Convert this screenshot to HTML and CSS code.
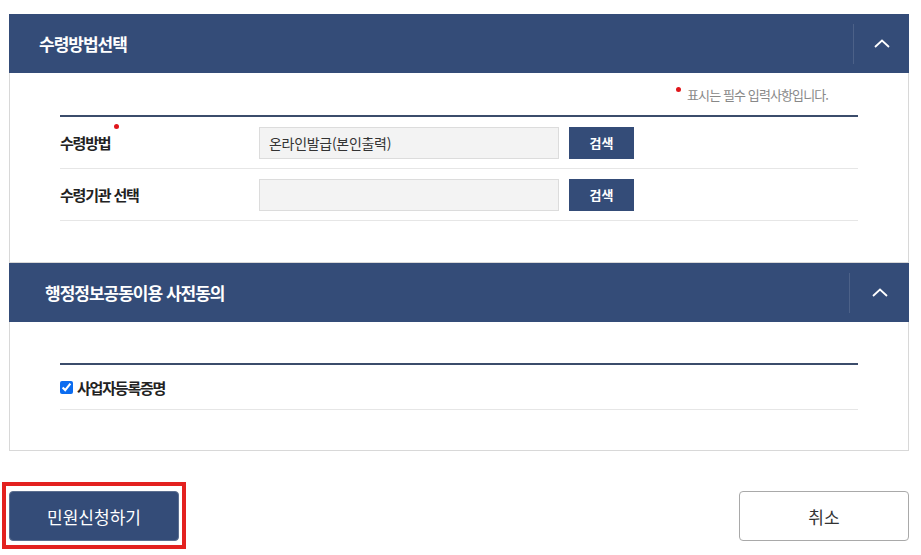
FILE: index.html
```html
<!DOCTYPE html>
<html lang="ko">
<head>
    <meta charset="UTF-8">
    <meta name="viewport" content="width=device-width, initial-scale=1.0">
    <title>수령방법선택</title>
    <link rel="stylesheet" href="styles.css">
</head>
<body>
    <div class="wrap">
        <section class="panel">
            <div class="panel-head">
                <h2>수령방법선택</h2>
                <button class="panel-toggle" type="button" aria-label="접기">
                    <svg width="16" height="9" viewBox="0 0 16 9"><polyline points="1,8 8,1.5 15,8" fill="none" stroke="#fff" stroke-width="1.8"/></svg>
                </button>
            </div>
            <div class="panel-body">
                <p class="req-note"><span class="req-dot"></span>표시는 필수 입력사항입니다.</p>
                <div class="form-table">
                    <div class="form-row">
                        <div class="form-label">수령방법<span class="req-dot"></span></div>
                        <div class="form-field">
                            <input class="text-input" type="text" value="온라인발급(본인출력)" readonly>
                            <button class="btn-search" type="button">검색</button>
                        </div>
                    </div>
                    <div class="form-row">
                        <div class="form-label">수령기관 선택</div>
                        <div class="form-field">
                            <input class="text-input" type="text" value="" readonly>
                            <button class="btn-search" type="button">검색</button>
                        </div>
                    </div>
                </div>
            </div>
        </section>

        <section class="panel panel-consent">
            <div class="panel-head">
                <h2>행정정보공동이용 사전동의</h2>
                <button class="panel-toggle" type="button" aria-label="접기">
                    <svg width="16" height="9" viewBox="0 0 16 9"><polyline points="1,8 8,1.5 15,8" fill="none" stroke="#fff" stroke-width="1.8"/></svg>
                </button>
            </div>
            <div class="panel-body">
                <div class="form-table">
                    <div class="form-row check-row">
                        <label class="check"><input type="checkbox" checked>사업자등록증명</label>
                    </div>
                </div>
            </div>
        </section>

        <div class="actions">
            <div class="highlight">
                <button class="btn-submit" type="button">민원신청하기</button>
            </div>
            <button class="btn-cancel" type="button">취소</button>
        </div>
    </div>
</body>
</html>
```

FILE: styles.css
```css
* {
    margin: 0;
    padding: 0;
    box-sizing: border-box;
}

body {
    font-family: "Noto Sans CJK KR", "Noto Sans", sans-serif;
    background: #fff;
    color: #222;
}

.wrap {
    width: 900px;
    margin: 14px 0 0 9px;
}

.panel-head {
    height: 59px;
    background: #344c78;
    display: flex;
    align-items: center;
    justify-content: space-between;
    padding-left: 30px;
}

.panel-head h2 {
    color: #fff;
    font-size: 17px;
    font-weight: 700;
    letter-spacing: -1px;
}

.panel-toggle {
    width: 56px;
    height: 40px;
    border: none;
    border-left: 1px solid rgba(255, 255, 255, 0.12);
    background: transparent;
    display: flex;
    align-items: center;
    justify-content: center;
    cursor: pointer;
}

.panel-consent .panel-head {
    padding-left: 36px;
}

.panel-consent .panel-toggle {
    width: 60px;
}

.panel-body {
    border: 1px solid #d8d8d8;
    border-top: none;
    padding: 12px 50px 41px 50px;
}

.panel-consent .panel-body {
    padding-top: 41px;
    padding-bottom: 40px;
}

.req-note {
    text-align: right;
    font-size: 13px;
    line-height: 20px;
    color: #888;
    letter-spacing: -0.9px;
    margin-bottom: 10px;
    padding-right: 30px;
}

.req-dot {
    display: inline-block;
    width: 5px;
    height: 5px;
    border-radius: 50%;
    background: #e0161b;
    vertical-align: top;
    margin: 2px 6px 0 0;
}

.form-table {
    border-top: 2px solid #3b4c6b;
}

.form-row {
    display: flex;
    align-items: center;
    height: 52px;
    border-bottom: 1px solid #e6e6e6;
}

.form-label {
    width: 199px;
    font-size: 15px;
    font-weight: 700;
    letter-spacing: -1.2px;
    color: #222;
}

.form-label .req-dot {
    margin: -8px 0 0 4px;
    vertical-align: top;
}

.form-field {
    display: flex;
    gap: 10px;
}

.text-input {
    width: 300px;
    height: 32px;
    border: 1px solid #dcdcdc;
    background: #f3f3f3;
    padding: 0 9px;
    font-family: inherit;
    font-size: 14px;
    color: #333;
    letter-spacing: -0.3px;
    outline: none;
}

.btn-search {
    width: 65px;
    height: 32px;
    border: none;
    background: #344c78;
    color: #fff;
    font-family: inherit;
    font-size: 13px;
    font-weight: 700;
    cursor: pointer;
}

.check-row {
    height: 45px;
}

.check {
    display: flex;
    align-items: center;
    font-size: 15px;
    font-weight: 700;
    letter-spacing: -1.2px;
    color: #222;
}

.check input {
    width: 13px;
    height: 13px;
    margin: 0 4px 0 0;
    accent-color: #0b6cf0;
}

.actions {
    display: flex;
    justify-content: space-between;
    align-items: flex-start;
    margin-top: 40px;
}

.highlight {
    border: 4px solid #e3211f;
    padding: 5px 3px 4px 3px;
    margin: -9px 0 0 -7px;
}

.btn-submit,
.btn-cancel {
    display: block;
    width: 170px;
    height: 50px;
    border-radius: 4px;
    font-family: inherit;
    font-size: 17px;
    cursor: pointer;
}

.btn-submit {
    background: #344c78;
    color: #fff;
    border: 1px solid #5c6f90;
}

.btn-cancel {
    background: #fff;
    color: #333;
    border: 1px solid #a9a9a9;
}
```
